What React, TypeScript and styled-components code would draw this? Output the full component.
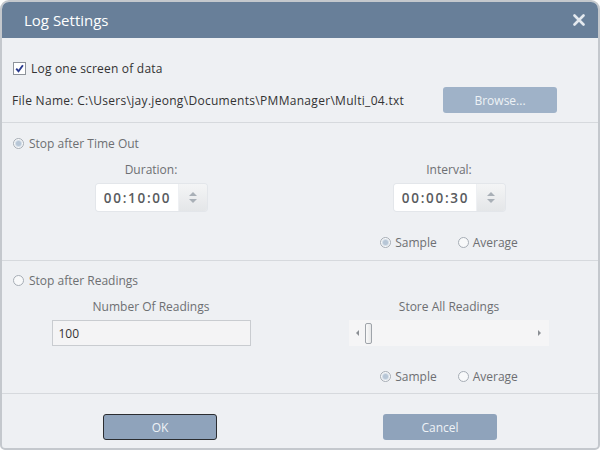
import React from 'react'
import styled, { createGlobalStyle } from 'styled-components'

const GlobalStyle = createGlobalStyle`
  body {
    margin: 0;
    background: #ffffff;
    font-family: "Open Sans", "Noto Sans", sans-serif;
  }
`

const Dialog = styled.div`
  width: 600px;
  height: 450px;
  box-sizing: border-box;
  border: 2px solid #c4c8cd;
  border-radius: 9px 9px 5px 5px;
  background: #eef0f3;
  overflow: hidden;
  display: flex;
  flex-direction: column;
  font-size: 12px;
  color: #333;
`

const TitleBar = styled.div`
  height: 36px;
  flex: none;
  background: #687f99;
  display: flex;
  align-items: center;
  justify-content: space-between;
  padding: 0 13px 0 22px;
`

const Title = styled.span`
  color: #ffffff;
  font-size: 15px;
`

const CloseBtn = styled.span`
  display: flex;
  width: 12px;
  height: 12px;
`

const Section = styled.div<{ $pt: number; $pb: number }>`
  display: flex;
  flex-direction: column;
  padding: ${p => p.$pt}px 0 ${p => p.$pb}px 0;
  border-bottom: 1px solid #d6d9dd;
`

const Row = styled.div`
  display: flex;
  align-items: center;
  height: 20px;
  padding-left: 11px;
  gap: 5px;
`

const FileRow = styled.div`
  display: flex;
  align-items: center;
  justify-content: space-between;
  margin-top: 9px;
  padding: 0 41px 0 10px;
`

const Label = styled.span<{ $muted?: boolean; $spacing?: number }>`
  color: ${p => (p.$muted ? '#6d6f72' : '#333')};
  letter-spacing: ${p => p.$spacing ?? 0}px;
  white-space: nowrap;
`

const Button = styled.button<{ $focused?: boolean; $light?: boolean }>`
  width: 114px;
  height: 26px;
  border-radius: 3px;
  border: ${p => (p.$focused ? '1.5px solid #2b2d30' : '1px solid transparent')};
  background: ${p => (p.$light ? '#9fb2c8' : '#8fa3bb')};
  color: #eef2f6;
  font-family: inherit;
  font-size: 12px;
  padding: 0;
`

const Columns = styled.div<{ $mt: number }>`
  display: grid;
  grid-template-columns: 1fr 1fr;
  margin-top: ${p => p.$mt}px;
`

const Column = styled.div`
  display: flex;
  flex-direction: column;
  align-items: center;
`

const ColTitle = styled.div`
  height: 20px;
  line-height: 20px;
  color: #6d6f72;
`

const Spinner = styled.div`
  display: flex;
  margin-top: 4px;
  height: 27px;
  border-radius: 3px;
  box-shadow: 0 0 0 1px #e3e6ea;
`

const TimeField = styled.div`
  width: 82px;
  background: #fff;
  display: flex;
  align-items: center;
  justify-content: center;
  font-size: 13.5px;
  font-weight: 600;
  letter-spacing: 1.7px;
  padding-left: 2px;
  box-sizing: border-box;
  color: #595b5e;
  border-radius: 3px 0 0 3px;
`

const SpinButtons = styled.div`
  width: 28px;
  margin-left: 1px;
  background: linear-gradient(#f4f5f6, #e4e6e8);
  border-radius: 0 3px 3px 0;
  display: flex;
  flex-direction: column;
  align-items: center;
  justify-content: center;
  gap: 3px;
`

const Arrow = styled.span<{ $dir: 'up' | 'down' | 'left' | 'right'; $size: number }>`
  width: 0;
  height: 0;
  border: ${p => p.$size}px solid transparent;
  ${p =>
    p.$dir === 'up'
      ? `border-bottom-color: #a9b0b7; border-top-width: 0;`
      : p.$dir === 'down'
      ? `border-top-color: #a9b0b7; border-bottom-width: 0;`
      : p.$dir === 'left'
      ? `border-right-color: #8b8f94; border-left-width: 0;`
      : `border-left-color: #8b8f94; border-right-width: 0;`}
`

const RadioGroup = styled.div`
  display: flex;
  align-items: center;
  height: 20px;
  gap: 21px;
`

const RadioItem = styled.label`
  display: flex;
  align-items: center;
  gap: 4px;
  color: #6d6f72;
`

const RadioCircle = styled.span<{ $checked?: boolean }>`
  width: 11px;
  height: 11px;
  box-sizing: border-box;
  border-radius: 50%;
  border: 1px solid #a6adb5;
  background: #f8f9fa;
  display: flex;
  align-items: center;
  justify-content: center;
  &::after {
    content: '';
    width: 5px;
    height: 5px;
    border-radius: 50%;
    background: ${p => (p.$checked ? '#b7c6d6' : 'transparent')};
    box-shadow: ${p => (p.$checked ? '0 0 0 1px #d4dee8' : 'none')};
  }
`

const Check = styled.span`
  width: 13px;
  height: 13px;
  box-sizing: border-box;
  border: 1px solid #8d939a;
  background: #fff;
  display: flex;
  align-items: center;
  justify-content: center;
`

const NumberInput = styled.div`
  margin-top: 3px;
  width: 199px;
  height: 26px;
  box-sizing: border-box;
  border: 1px solid #c9ccd0;
  background: #f4f4f5;
  display: flex;
  align-items: center;
  padding-left: 6px;
  color: #333;
`

const Slider = styled.div`
  margin-top: 3px;
  width: 200px;
  height: 26px;
  background: #f5f5f6;
  display: flex;
  align-items: center;
  padding: 0 8px 0 7px;
  box-sizing: border-box;
`

const Thumb = styled.span`
  width: 7px;
  height: 21px;
  box-sizing: border-box;
  border: 1px solid #9fa4aa;
  border-radius: 2px;
  background: linear-gradient(90deg, #fafafa, #e6e7e8);
  margin-left: 6px;
`

const Track = styled.span`
  flex: 1;
`

const RadioRow = styled.div<{ $mt: number }>`
  margin-top: ${p => p.$mt}px;
`

const Footer = styled.div`
  flex: 1;
  display: flex;
  justify-content: center;
  gap: 166px;
  padding-top: 20px;
`

function Radios() {
  return (
    <RadioGroup>
      <RadioItem>
        <RadioCircle $checked />
        Sample
      </RadioItem>
      <RadioItem>
        <RadioCircle />
        Average
      </RadioItem>
    </RadioGroup>
  )
}

function TimeSpinner({ value }: { value: string }) {
  return (
    <Spinner>
      <TimeField>{value}</TimeField>
      <SpinButtons>
        <Arrow $dir="up" $size={4} />
        <Arrow $dir="down" $size={4} />
      </SpinButtons>
    </Spinner>
  )
}

export default function App() {
  return (
    <>
      <GlobalStyle />
      <Dialog>
        <TitleBar>
          <Title>Log Settings</Title>
          <CloseBtn>
            <svg width="12" height="12" viewBox="0 0 12 12">
              <path d="M1.5 1.5 L10.5 10.5 M10.5 1.5 L1.5 10.5" stroke="#e4e9ef" strokeWidth="2.6" strokeLinecap="round" />
            </svg>
          </CloseBtn>
        </TitleBar>

        <Section $pt={20} $pb={9}>
          <Row>
            <Check>
              <svg width="9" height="9" viewBox="0 0 9 9">
                <path d="M1.2 4.6 L3.5 7.2 L7.9 1.2" stroke="#2a3b8f" strokeWidth="1.9" fill="none" />
              </svg>
            </Check>
            <Label $spacing={0.2}>Log one screen of data</Label>
          </Row>
          <FileRow>
            <Label $spacing={0.3}>File Name: C:\Users\jay.jeong\Documents\PMManager\Multi_04.txt</Label>
            <Button $light>Browse...</Button>
          </FileRow>
        </Section>

        <Section $pt={10} $pb={8}>
          <Row>
            <RadioCircle $checked />
            <Label $muted>Stop after Time Out</Label>
          </Row>
          <Columns $mt={7}>
            <Column>
              <ColTitle>Duration:</ColTitle>
              <TimeSpinner value="00:10:00" />
            </Column>
            <Column>
              <ColTitle>Interval:</ColTitle>
              <TimeSpinner value="00:00:30" />
              <RadioRow $mt={21}>
                <Radios />
              </RadioRow>
            </Column>
          </Columns>
        </Section>

        <Section $pt={9} $pb={7}>
          <Row>
            <RadioCircle />
            <Label $muted>Stop after Readings</Label>
          </Row>
          <Columns $mt={7}>
            <Column>
              <ColTitle>Number Of Readings</ColTitle>
              <NumberInput>100</NumberInput>
            </Column>
            <Column>
              <ColTitle>Store All Readings</ColTitle>
              <Slider>
                <Arrow $dir="left" $size={3} />
                <Thumb />
                <Track />
                <Arrow $dir="right" $size={3} />
              </Slider>
              <RadioRow $mt={20}>
                <Radios />
              </RadioRow>
            </Column>
          </Columns>
        </Section>

        <Footer>
          <Button $focused>OK</Button>
          <Button>Cancel</Button>
        </Footer>
      </Dialog>
    </>
  )
}
